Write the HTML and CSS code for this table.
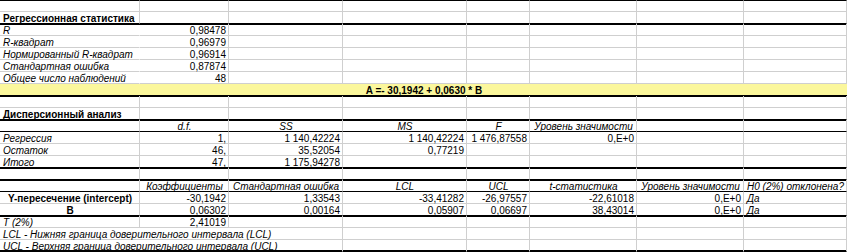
FILE: index.html
```html
<!DOCTYPE html>
<html lang="ru">
<head>
<meta charset="utf-8">
<title>Регрессионная статистика</title>
<link rel="stylesheet" href="styles.css">
</head>
<body>
<div class="sheet">
  <div class="row top"><div></div><div></div><div></div><div></div><div></div><div></div><div></div><div></div></div>
  <div class="row thick"><div class="b">Регрессионная статистика</div><div></div><div></div><div></div><div></div><div></div><div></div><div></div></div>
  <div class="row"><div class="i nor">R</div><div class="r">0,98478</div><div></div><div></div><div></div><div></div><div></div><div></div></div>
  <div class="row"><div class="i nor">R-квадрат</div><div class="r">0,96979</div><div></div><div></div><div></div><div></div><div></div><div></div></div>
  <div class="row"><div class="i nor">Нормированный R-квадрат</div><div class="r">0,96914</div><div></div><div></div><div></div><div></div><div></div><div></div></div>
  <div class="row"><div class="i nor">Стандартная ошибка</div><div class="r">0,87874</div><div></div><div></div><div></div><div></div><div></div><div></div></div>
  <div class="row"><div class="i nor">Общее число наблюдений</div><div class="r">48</div><div></div><div></div><div></div><div></div><div></div><div></div></div>
  <div class="row thick formula"><div class="b c all">A =- 30,1942 + 0,0630 * B</div></div>
  <div class="row"><div></div><div></div><div></div><div></div><div></div><div></div><div></div><div></div></div>
  <div class="row thick"><div class="b">Дисперсионный анализ</div><div></div><div></div><div></div><div></div><div></div><div></div><div></div></div>
  <div class="row dark"><div></div><div class="i c">d.f.</div><div class="i c">SS</div><div class="i c">MS</div><div class="i c">F</div><div class="i c">Уровень значимости</div><div></div><div></div></div>
  <div class="row"><div class="i">Регрессия</div><div class="r">1,</div><div class="r">1 140,42224</div><div class="r">1 140,42224</div><div class="r">1 476,87558</div><div class="r">0,E+0</div><div></div><div></div></div>
  <div class="row"><div class="i">Остаток</div><div class="r">46,</div><div class="r">35,52054</div><div class="r">0,77219</div><div></div><div></div><div></div><div></div></div>
  <div class="row thick"><div class="i">Итого</div><div class="r">47,</div><div class="r">1 175,94278</div><div></div><div></div><div></div><div></div><div></div></div>
  <div class="row thick"><div></div><div></div><div></div><div></div><div></div><div></div><div></div><div></div></div>
  <div class="row dark"><div></div><div class="i c">Коэффициенты</div><div class="i c">Стандартная ошибка</div><div class="i c">LCL</div><div class="i c">UCL</div><div class="i c">t-статистика</div><div class="i c">Уровень значимости</div><div class="i">H0 (2%) отклонена?</div></div>
  <div class="row"><div class="b c">Y-пересечение (intercept)</div><div class="r">-30,1942</div><div class="r">1,33543</div><div class="r">-33,41282</div><div class="r">-26,97557</div><div class="r">-22,61018</div><div class="r">0,E+0</div><div class="i">Да</div></div>
  <div class="row thick"><div class="b c">B</div><div class="r">0,06302</div><div class="r">0,00164</div><div class="r">0,05907</div><div class="r">0,06697</div><div class="r">38,43014</div><div class="r">0,E+0</div><div class="i">Да</div></div>
  <div class="row"><div class="i">T (2%)</div><div class="r">2,41019</div><div></div><div></div><div></div><div></div><div></div><div></div></div>
  <div class="row"><div class="i span3">LCL - Нижняя граница доверительного интервала (LCL)</div><div></div><div></div><div></div><div></div><div></div></div>
  <div class="row thick last"><div class="i span3">UCL - Верхняя граница доверительного интервала (UCL)</div><div></div><div></div><div></div><div></div><div></div></div>
</div>
</body>
</html>
```

FILE: styles.css
```css
html, body {
  margin: 0;
  padding: 0;
  background: #ffffff;
}

.sheet {
  width: 847px;
  font-family: "Liberation Sans", Arial, sans-serif;
  font-size: 10px;
  color: #000;
}

.row {
  display: grid;
  grid-template-columns: 140px 89px 114px 124px 63px 107px 107px 103px;
  height: 12px;
}

.row > div {
  box-sizing: border-box;
  height: 12px;
  border-right: 1px solid #cfcfcf;
  border-bottom: 1px solid #cfcfcf;
  padding: 1px 2px 0 3px;
  line-height: 12px;
  white-space: nowrap;
  overflow: visible;
  min-width: 0;
}

.row.top > div {
  border-top: 1px solid #000;
  padding-top: 0;
}

.row.thick > div {
  border-bottom: 1px solid #000;
  box-shadow: 0 1px 0 #000;
}

.row.last > div {
  box-shadow: 0 -1px 0 #000 inset;
}

.row.dark > div {
  border-bottom: 1px solid #000;
}

.row > div.nor {
  border-right-color: transparent;
}

.formula {
  background: #fbf79c;
}

.row > div.all {
  grid-column: 1 / -1;
  border-right: none;
}

.row > div.span3 {
  grid-column: span 3;
}

.b { font-weight: bold; }
.i { font-style: italic; }
.r { text-align: right; }
.c { text-align: center; }
```
